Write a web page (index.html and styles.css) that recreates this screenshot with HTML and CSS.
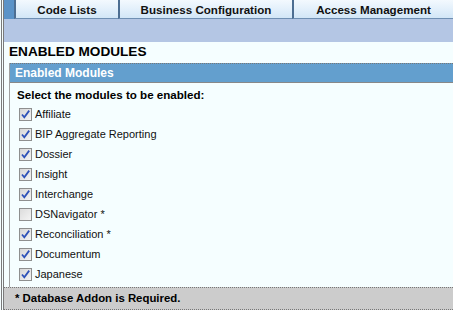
FILE: index.html
```html
<!DOCTYPE html>
<html lang="en">
<head>
    <meta charset="UTF-8">
    <title>Enabled Modules</title>
    <link rel="stylesheet" href="styles.css">
</head>
<body>
    <div class="page">
        <div class="tabs">
            <div class="tab-lead"></div>
            <div class="tab tab-code">Code Lists</div>
            <div class="tab tab-business">Business Configuration</div>
            <div class="tab tab-access">Access Management</div>
        </div>
        <div class="band"></div>

        <h1>ENABLED MODULES</h1>

        <div class="panel">
            <div class="panel-head">Enabled Modules</div>
            <div class="panel-body">
                <p class="intro">Select the modules to be enabled:</p>
                <ul class="modules">
                    <li><span class="box checked"></span>Affiliate</li>
                    <li><span class="box checked"></span>BIP Aggregate Reporting</li>
                    <li><span class="box checked"></span>Dossier</li>
                    <li><span class="box checked"></span>Insight</li>
                    <li><span class="box checked"></span>Interchange</li>
                    <li><span class="box"></span>DSNavigator *</li>
                    <li><span class="box checked"></span>Reconciliation *</li>
                    <li><span class="box checked"></span>Documentum</li>
                    <li><span class="box checked"></span>Japanese</li>
                </ul>
            </div>
        </div>

        <div class="note">* Database Addon is Required.</div>
    </div>
</body>
</html>
```

FILE: styles.css
```css
html, body {
    margin: 0;
    padding: 0;
    height: 100%;
}
body {
    background: #f5feff;
    font-family: 'Liberation Sans', Arial, sans-serif;
    color: #000;
    overflow: hidden;
}
.page {
    margin-left: 1px;
    border-left: 3px double #7a7a7a;
    height: 310px;
}
.tabs {
    display: flex;
    height: 19px;
}
.tab-lead {
    width: 10px;
    background: #5b93c8;
}
.tab {
    box-sizing: border-box;
    border-left: 2px solid #4d6e92;
    border-bottom: 1px solid #6f8fb3;
    background: linear-gradient(#f3f9fe 0%, #e3f0fb 50%, #d2e6f7 100%);
    font-size: 11.6px;
    font-weight: bold;
    color: #111;
    line-height: 19px;
    text-align: center;
}
.tab-code {
    width: 104px;
}
.tab-business {
    width: 174px;
}
.tab-access {
    flex: 1;
}
.band {
    height: 23px;
    background: #b4c6e4;
}
h1 {
    margin: 2px 0 3px 5px;
    font-size: 13.6px;
    line-height: 16px;
    font-weight: bold;
}
.panel {
    margin-left: 5px;
    border-left: 1px solid #a0a0a0;
}
.panel-head {
    border-top: 1px dotted #777;
    border-bottom: 1px solid #888;
    background: #639fce;
    color: #fff;
    font-size: 12px;
    font-weight: bold;
    height: 18px;
    line-height: 18px;
    padding-left: 5px;
}
.panel-body {
    padding: 4px 0 3px 6px;
}
.intro {
    margin: 0 0 1px 1px;
    font-size: 11.6px;
    font-weight: bold;
    line-height: 16px;
}
.modules {
    list-style: none;
    margin: 0;
    padding: 0;
}
.modules li {
    display: flex;
    align-items: center;
    height: 20px;
    font-size: 11px;
    color: #111;
}
.box {
    box-sizing: border-box;
    width: 13px;
    height: 13px;
    margin: 0 3px 0 3px;
    border: 1px solid #8e8f8f;
    background: linear-gradient(135deg, #dcdcdc 0%, #f4f4f4 100%);
}
.box.checked {
    background:
        url("data:image/svg+xml;utf8,<svg xmlns='http://www.w3.org/2000/svg' width='11' height='11'><path d='M2 5.5 L4.3 8.3 L9.2 1.6' fill='none' stroke='%232f52b8' stroke-width='1.8'/></svg>") no-repeat center,
        linear-gradient(135deg, #d6d6d6 0%, #f4f4f4 100%);
}
.note {
    border-top: 1px dotted #777;
    border-bottom: 1px dotted #777;
    background: #cccccc;
    font-size: 11.4px;
    font-weight: bold;
    height: 21px;
    line-height: 21px;
    padding-left: 11px;
}
```
